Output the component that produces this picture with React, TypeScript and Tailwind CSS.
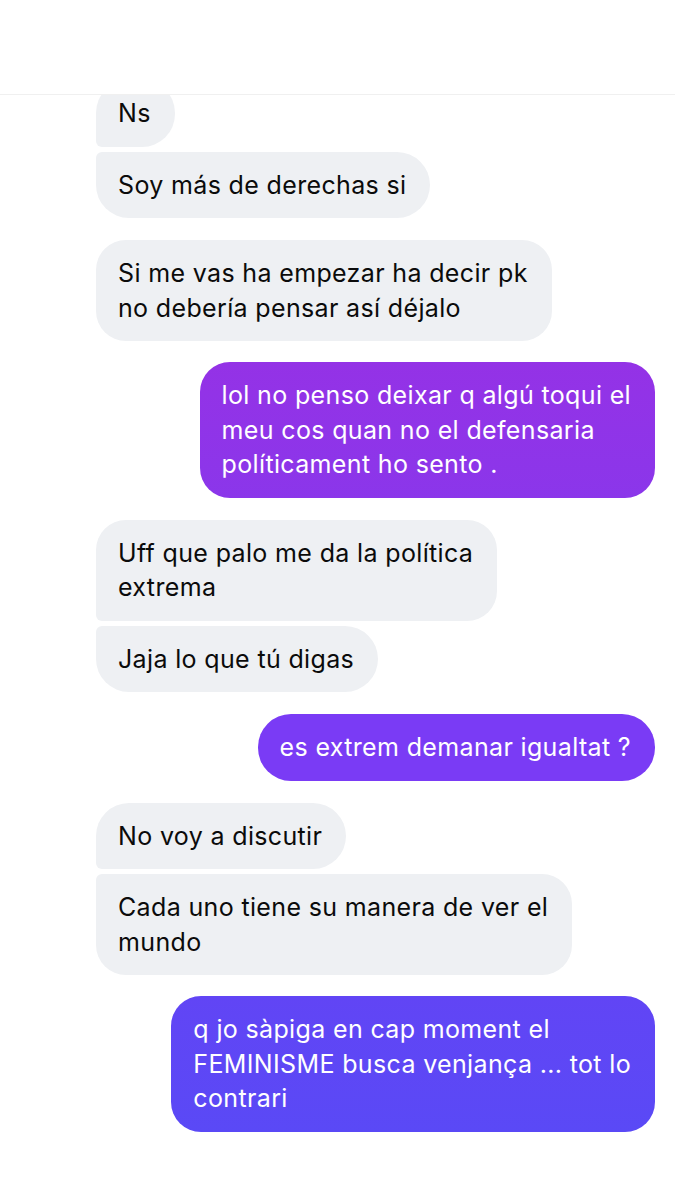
import React from 'react';

type Msg = {
    side: 'in' | 'out';
    lines: string[];
    bg?: string;
    corner?: string;
    gap: string;
};

const messages: Msg[] = [
    { side: 'in', lines: ['Ns'], corner: 'rounded-bl-[6px]', gap: 'mt-[-15px]' },
    { side: 'in', lines: ['Soy más de derechas si'], corner: 'rounded-tl-[6px]', gap: 'mt-[5px]' },
    { side: 'in', lines: ['Si me vas ha empezar ha decir pk', 'no debería pensar así déjalo'], gap: 'mt-[22px]' },
    {
        side: 'out',
        lines: ['lol no penso deixar q algú toqui el', 'meu cos quan no el defensaria', 'políticament ho sento .'],
        bg: 'bg-gradient-to-b from-[#9432e6] to-[#8b36ea]',
        gap: 'mt-[21px]',
    },
    { side: 'in', lines: ['Uff que palo me da la política', 'extrema'], corner: 'rounded-bl-[6px]', gap: 'mt-[22px]' },
    { side: 'in', lines: ['Jaja lo que tú digas'], corner: 'rounded-tl-[6px]', gap: 'mt-[5px]' },
    { side: 'out', lines: ['es extrem demanar igualtat ?'], bg: 'bg-[#7a3bf5]', gap: 'mt-[22px]' },
    { side: 'in', lines: ['No voy a discutir'], corner: 'rounded-bl-[6px]', gap: 'mt-[22px]' },
    { side: 'in', lines: ['Cada uno tiene su manera de ver el', 'mundo'], corner: 'rounded-tl-[6px]', gap: 'mt-[5px]' },
    {
        side: 'out',
        lines: ['q jo sàpiga en cap moment el', 'FEMINISME busca venjança ... tot lo', 'contrari'],
        bg: 'bg-gradient-to-b from-[#6145f5] to-[#5a49f6]',
        gap: 'mt-[21px]',
    },
];

const Bubble = ({ msg }: { msg: Msg }) => {
    const isIn = msg.side === 'in';
    const radius = msg.lines.length > 1 ? 'rounded-[30px]' : 'rounded-[33px]';
    return (
        <div className={`flex ${isIn ? 'justify-start' : 'justify-end'} ${msg.gap}`}>
            <div
                className={`${radius} ${msg.corner ?? ''} ${isIn ? 'bg-[#eef0f3] text-[#0b0b0b]' : `${msg.bg} text-white`} pl-[22px] pr-[24px] py-[16px] text-[25px] leading-[34.5px] tracking-[0.35px] whitespace-nowrap`}
            >
                {msg.lines.map((l, i) => (
                    <div key={i}>{l}</div>
                ))}
            </div>
        </div>
    );
};

export default function App() {
    return (
        <div className="w-[675px] h-[1200px] bg-white overflow-hidden font-['Inter','Liberation_Sans',Arial,sans-serif]">
            {/* Top bar */}
            <div className="h-[95px] border-b border-[#f0f0f0] bg-white relative z-10" />

            {/* Conversation */}
            <div className="overflow-hidden h-[1104px]">
                <div className="pl-[96px] pr-[20px]">
                    {messages.map((m, i) => (
                        <Bubble key={i} msg={m} />
                    ))}
                </div>
            </div>
        </div>
    );
}
